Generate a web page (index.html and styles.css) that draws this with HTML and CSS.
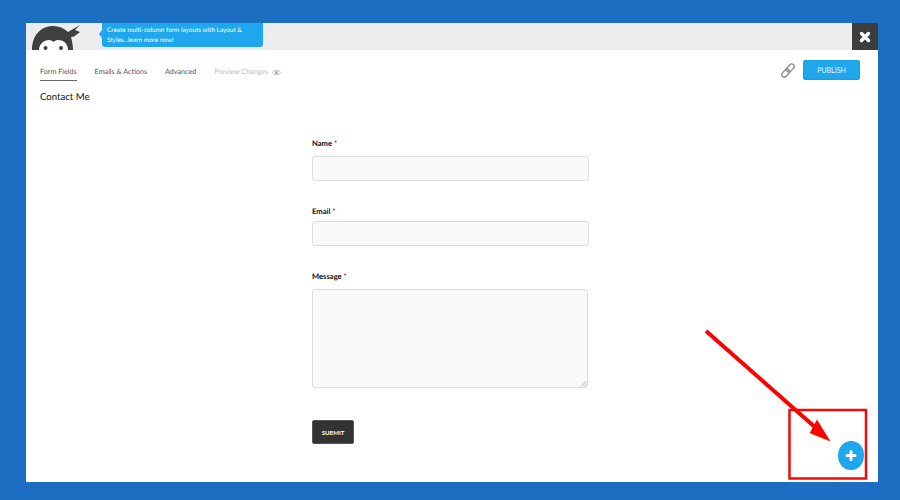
FILE: index.html
```html
<!DOCTYPE html>
<html lang="en">
<head>
<meta charset="utf-8">
<title>Contact Me</title>
<link rel="stylesheet" href="styles.css">
</head>
<body>
<div class="window">
  <header class="topbar">
    <svg class="logo" width="72" height="27" viewBox="0 0 72 27">
      <path class="ink" d="M6 27 C6 12 15 3 27 3 C33 3 38 5 42 9 L54 2 L49 7 L54 9 L48 13.500 L45 14 C46 18 47 22 47 27 Z"/>
      <path class="face" d="M13 27 C13 21 18 17 23 17 C25 17 26.500 18 27.500 19 C28.500 18 30 17 32 17 C38 17 42 21 42 27 Z"/>
      <circle class="ink" cx="19.500" cy="25" r="2"/>
      <circle class="ink" cx="35" cy="25" r="2"/>
    </svg>
    <div class="promo">Create multi-column form layouts with Layout &amp; Styles...learn more now!</div>
    <button class="close" type="button" aria-label="Close">
      <svg width="12" height="12" viewBox="0 0 12 12"><path d="M2.500 2.500 L9.500 9.500 M9.500 2.500 L2.500 9.500"/></svg>
    </button>
  </header>
  <nav class="tabs">
    <a class="tab active">Form Fields</a>
    <a class="tab">Emails &amp; Actions</a>
    <a class="tab">Advanced</a>
    <a class="tab muted">Preview Changes
      <svg class="eye" width="9" height="7" viewBox="0 0 9 7"><path d="M.3 3.500 C2 .6 7 .6 8.700 3.500 C7 6.400 2 6.400 .3 3.500 Z"/><circle cx="4.500" cy="3.500" r="1.500"/></svg>
    </a>
    <div class="actions">
      <svg class="clip" width="14" height="15" viewBox="0 0 14 15"><g transform="rotate(42 7 7.500)"><rect x="4.500" y="-.5" width="5" height="9" rx="2.500"/><rect x="4.500" y="6.500" width="5" height="9" rx="2.500"/></g></svg>
      <button class="publish" type="button">PUBLISH</button>
    </div>
  </nav>
  <h1 class="title">Contact Me</h1>
  <form class="form">
    <label class="label">Name <span class="req">*</span></label>
    <div class="input"></div>
    <label class="label email">Email <span class="req">*</span></label>
    <div class="input"></div>
    <label class="label message">Message <span class="req">*</span></label>
    <div class="textarea">
      <svg class="grip" width="7" height="7" viewBox="0 0 7 7"><path d="M1 6.500 L6.500 1 M4 6.500 L6.500 4"/></svg>
    </div>
    <button class="submit" type="button">SUBMIT</button>
  </form>
</div>
<svg class="annotation" width="900" height="500" viewBox="0 0 900 500">
  <path class="fab-circle" d="M851 441 C859.500 441 864 447.500 864 455.500 C864 464 858.500 470 851 470 C843.500 470 838 464 838 455.500 C838 447.500 843.500 441 851 441 Z"/>
  <path class="fab-plus" d="M851 451.500 V459.500 M847 455.500 H855"/>
  <rect class="box" x="789.500" y="410" width="76.500" height="68.500"/>
  <path class="shaft" d="M706 331 L816 428"/>
  <path class="head" d="M830 441 L817 420 L810 433 Z"/>
</svg>
</body>
</html>
```
FILE: styles.css
```css
* { box-sizing: border-box; }
html, body { margin: 0; height: 500px; overflow: hidden; }
body {
  background: #1b6ec2;
  padding: 23px 22px 18px 26px;
  font-family: "Lato", "Open Sans", "Liberation Sans", sans-serif;
  color: #222;
  text-rendering: geometricPrecision;
}
.window { position: relative; height: 459px; background: #fff; }
.topbar { display: flex; height: 27px; background: #ebecee; overflow: hidden; }
.logo { flex: none; }
.ink { fill: #3f3f3f; }
.face { fill: #fff; }
.promo {
  position: relative;
  flex: none;
  width: 161px;
  height: 24px;
  margin-left: 4px;
  padding: 3px 5px;
  background: #1ea7ec;
  border-radius: 0 0 3px 3px;
  color: #fff;
  font-size: 6.400px;
  line-height: 9.500px;
}
.promo::before {
  content: "";
  position: absolute;
  left: -3px;
  top: 7px;
  border-top: 4px solid transparent;
  border-bottom: 4px solid transparent;
  border-right: 3px solid #1ea7ec;
}
.close {
  margin-left: auto;
  flex: none;
  width: 26px;
  height: 27px;
  padding: 0;
  border: 0;
  background: #3d3d3d;
  display: flex;
  align-items: center;
  justify-content: center;
}
.close path { stroke: #fff; stroke-width: 3.500; stroke-linecap: round; fill: none; }
.tabs {
  display: flex;
  align-items: flex-start;
  height: 36px;
  padding: 17px 18px 0 14px;
  gap: 18px;
}
.tab {
  font-size: 7.200px;
  line-height: 10px;
  color: #555;
  padding-bottom: 3px;
  white-space: nowrap;
}
.tab.active { border-bottom: 1.500px solid #666; }
.tab.muted { color: #bdbdbd; display: flex; align-items: center; gap: 4px; }
.eye { flex: none; }
.eye path { fill: none; stroke: #aaa; stroke-width: .8; }
.eye circle { fill: #aaa; }
.actions {
  margin-left: auto;
  margin-top: -7px;
  display: flex;
  align-items: center;
  gap: 8px;
}
.clip rect { fill: none; stroke: #8a8a8a; stroke-width: 1.300; }
.publish {
  width: 57px;
  height: 20px;
  padding: 1px 0 0;
  border: 1px solid #1b9fe3;
  border-radius: 2px;
  background: #1ea7ec;
  color: #e8f6fe;
  font: 400 7px/17px "Lato", "Open Sans", sans-serif;
}
.title {
  margin: 0;
  padding-left: 14px;
  font-size: 9.600px;
  line-height: 14px;
  font-weight: 400;
  color: #111;
  position: relative;
  top: 5px;
}
.form {
  display: flex;
  flex-direction: column;
  align-items: flex-start;
  width: 278px;
  margin: 38px 0 0 286px;
}
.label {
  font-size: 7.600px;
  line-height: 10px;
  font-weight: 700;
  color: #111;
  margin-bottom: 8px;
}
.label.email { margin-top: 25px; margin-bottom: 5px; }
.label.message { margin-top: 25px; margin-bottom: 8px; }
.req { color: #e01010; }
.input, .textarea {
  width: 277px;
  background: #f9f9f9;
  border: 1px solid #dedede;
  border-radius: 3px;
}
.input { height: 25px; }
.textarea { position: relative; width: 276px; height: 99px; }
.grip { position: absolute; right: 0; bottom: 0; }
.grip path { stroke: #999; stroke-width: .8; fill: none; }
.submit {
  width: 42px;
  height: 24px;
  margin-top: 32px;
  padding: 1px 0 0;
  border: 1px solid #555;
  border-radius: 2px;
  background: #333;
  color: #fff;
  font: 700 6px/21px "Lato", "Open Sans", sans-serif;
}
.annotation { position: absolute; left: 0; top: 0; pointer-events: none; }
.fab-circle { fill: #1ea7ec; }
.fab-plus { stroke: #fff; stroke-width: 3; stroke-linecap: round; fill: none; }
.box { fill: none; stroke: #f00a0a; stroke-width: 2.500; }
.shaft { stroke: #f00; stroke-width: 4; fill: none; }
.head { fill: #f00; stroke: #f00; stroke-width: .5; }
```
